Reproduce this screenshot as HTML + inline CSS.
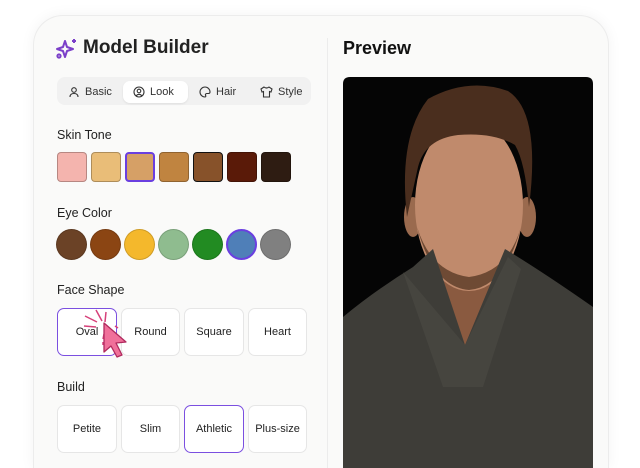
<!DOCTYPE html>
<html><head><meta charset="utf-8"><style>
*{box-sizing:border-box;margin:0;padding:0}
html,body{width:640px;height:468px;overflow:hidden}
body{background:#fff;font-family:"Liberation Sans",sans-serif;position:relative;color:#1a1a1a}
.card{position:absolute;left:33px;top:15px;width:576px;height:453px;background:#fafaf9;border:1px solid #ececec;border-bottom:none;border-radius:30px 30px 0 0;box-shadow:0 0 14px rgba(0,0,0,.05)}
.div{position:absolute;left:327px;top:38px;width:1px;height:430px;background:#ececec}
.abs{position:absolute}
h1{position:absolute;left:83px;top:37px;font-size:19px;font-weight:bold;color:#222}
h2{position:absolute;left:343px;top:38px;font-size:18px;font-weight:bold;color:#111}
.tabs{position:absolute;left:57px;top:77px;width:254px;height:28px;background:#f1f1f1;border-radius:8px}
.tab{position:absolute;top:4px;height:22px;font-size:11px;color:#333;display:flex;align-items:center;gap:5px}
.tab.on{background:#fff;border-radius:7px;box-shadow:0 1px 2px rgba(0,0,0,.08)}
.lbl{position:absolute;left:57px;font-size:12.5px;color:#222}
.sw{position:absolute;width:30px;height:30px;border-radius:4px;border:1px solid rgba(0,0,0,.25)}
.ey{position:absolute;width:31px;height:31px;border-radius:50%;border:1px solid rgba(0,0,0,.15)}
.btn{position:absolute;height:48px;background:#fff;border:1px solid #e6e6e6;border-radius:7px;font-size:11px;display:flex;align-items:center;justify-content:center;color:#222}
.sel{border:1.5px solid #7b4fe0}
</style></head><body>
<div class="card"></div>
<div class="div"></div>
<svg class="abs" style="left:55px;top:37px" width="24" height="24" viewBox="0 0 24 24" fill="none" stroke="#7b3fc9" stroke-width="2" stroke-linejoin="round"><path d="M10 4 L12 10 L18 12 L12 14 L10 20 L8 14 L2 12 L8 10 Z"/><path d="M19 2v4M17 4h4"/><circle cx="4" cy="19" r="1.6"/></svg>
<h1>Model Builder</h1>
<h2>Preview</h2>
<div class="tabs">
<div class="tab" style="left:11px"><svg width="12" height="12" viewBox="0 0 12 12" fill="none" stroke="#333" stroke-width="1.1"><circle cx="6" cy="4" r="2.3"/><path d="M2 11Q2 7.5 6 7.5T10 11"/></svg>Basic</div>
<div class="tab on" style="left:66px;width:65px;padding-left:10px"><svg width="12" height="12" viewBox="0 0 12 12" fill="none" stroke="#333" stroke-width="1.1"><circle cx="6" cy="6" r="5"/><circle cx="6" cy="5" r="1.8"/><path d="M3 9.8Q6 6.8 9 9.8"/></svg>Look</div>
<div class="tab" style="left:142px"><svg width="12" height="12" viewBox="0 0 12 12" fill="none" stroke="#333" stroke-width="1.1"><path d="M6 1a5 5 0 1 0 0 10c1 0 1-1 .5-1.8S7 7.5 8 7.5h1.5A1.5 1.5 0 0 0 11 6 5 5 0 0 0 6 1z"/></svg>Hair</div>
<div class="tab" style="left:203px"><svg width="13" height="12" viewBox="0 0 13 12" fill="none" stroke="#333" stroke-width="1.1"><path d="M4 1L1 3l1 3 1.5-.5V11h6V5.5L11 6l1-3-3-2Q6.5 3 4 1z"/></svg>Style</div>
</div>
<div class="lbl" style="top:128px">Skin Tone</div>
<div class="sw" style="left:57px;top:152px;background:#f4b4ae"></div>
<div class="sw" style="left:91px;top:152px;background:#e9bd78"></div>
<div class="sw" style="left:125px;top:152px;background:#d6a066;border:2px solid #6a3fe0"></div>
<div class="sw" style="left:159px;top:152px;background:#c08440"></div>
<div class="sw" style="left:193px;top:152px;background:#87522a;border-color:#111"></div>
<div class="sw" style="left:227px;top:152px;background:#5a1a08"></div>
<div class="sw" style="left:261px;top:152px;background:#2e1c12"></div>
<div class="lbl" style="top:206px">Eye Color</div>
<div class="ey" style="left:56px;top:229px;background:#6b4226"></div>
<div class="ey" style="left:90px;top:229px;background:#8b4513"></div>
<div class="ey" style="left:124px;top:229px;background:#f4b82c"></div>
<div class="ey" style="left:158px;top:229px;background:#8fbc8f"></div>
<div class="ey" style="left:192px;top:229px;background:#228b22"></div>
<div class="ey" style="left:226px;top:229px;background:#4f7fb8;border:2px solid #6a3fe0"></div>
<div class="ey" style="left:260px;top:229px;background:#808080"></div>
<div class="lbl" style="top:283px">Face Shape</div>
<div class="btn sel" style="left:57px;top:308px;width:60px">Oval</div>
<div class="btn" style="left:121px;top:308px;width:59px">Round</div>
<div class="btn" style="left:184px;top:308px;width:60px">Square</div>
<div class="btn" style="left:248px;top:308px;width:59px">Heart</div>
<svg class="abs" style="left:82px;top:308px" width="50" height="55" viewBox="0 0 50 55"><g stroke="#d6417a" stroke-width="1.5" fill="none"><path d="M3 8l12 6M14 2l6 11M24 4l-1 10M2 18l12 1M33 18l3 2M22 26l-1 5M21 34l0 3"/></g><path d="M22 15 L44 34 L34 35 L40 47 L35 49 L29 38 L22 44 Z" fill="#f0709a" stroke="#b02a5e" stroke-width="1.3" stroke-linejoin="round"/></svg>
<div class="lbl" style="top:380px">Build</div>
<div class="btn" style="left:57px;top:405px;width:60px">Petite</div>
<div class="btn" style="left:121px;top:405px;width:59px">Slim</div>
<div class="btn sel" style="left:184px;top:405px;width:60px">Athletic</div>
<div class="btn" style="left:248px;top:405px;width:59px">Plus-size</div>
<svg class="abs" style="left:343px;top:77px" width="250" height="391" viewBox="0 0 250 391">
<path d="M0 7Q0 0 7 0H243Q250 0 250 7V391H0Z" fill="#050505"/>
<rect x="85" y="160" width="80" height="110" fill="#8a5a40"/>
<ellipse cx="70" cy="140" rx="9" ry="20" fill="#9a6a4e"/>
<ellipse cx="184" cy="140" rx="9" ry="20" fill="#9a6a4e"/>
<ellipse cx="126" cy="128" rx="54" ry="86" fill="#c08a6c"/>
<path d="M74 150 Q90 210 126 213 Q162 210 178 150 Q165 195 126 200 Q88 195 74 150Z" fill="#6e4a34"/>
<path d="M64 140 Q55 60 85 22 Q125 0 165 14 Q198 35 186 130 Q182 85 172 68 Q150 55 115 58 Q82 62 75 90 Z" fill="#4a2e1e"/>
<path d="M0 391 L0 240 Q30 215 70 190 L90 172 L122 268 L162 172 Q200 195 250 230 L250 391Z" fill="#3e3d38"/>
<path d="M60 195 L122 268 L165 180 L178 192 L140 310 L100 310Z" fill="#4a4843" opacity=".7"/>
</svg>
</body></html>
